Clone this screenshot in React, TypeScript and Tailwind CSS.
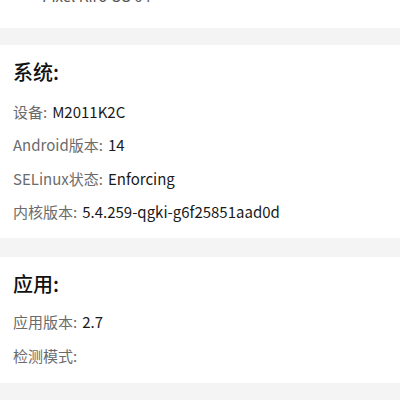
const FONT = { fontFamily: '"Noto Sans CJK SC", "Noto Sans", sans-serif' };

interface Row {
  label: string;
  value?: string;
}

const SYSTEM: Row[] = [
  { label: "设备", value: "M2011K2C" },
  { label: "Android版本", value: "14" },
  { label: "SELinux状态", value: "Enforcing" },
  { label: "内核版本", value: "5.4.259-qgki-g6f25851aad0d" },
];

const APP: Row[] = [
  { label: "应用版本", value: "2.7" },
  { label: "检测模式" },
];

function Section({ title, rows, rowClass, gapClass }: { title: string; rows: Row[]; rowClass: string; gapClass: string }) {
  return (
    <div className="bg-white px-[13px] pt-[13px]">
      <div className={`flex h-[28px] items-center text-[20px] font-medium text-[#111] ${gapClass}`}>
        {title}:
      </div>
      {rows.map((r) => (
        <div key={r.label} className={`flex items-center text-[15px] ${rowClass}`}>
          <span className="text-[#6b6b6b]">{r.label}:</span>
          {r.value && <span className="ml-[5px] text-[#1a1a1a]">{r.value}</span>}
        </div>
      ))}
    </div>
  );
}

export default function App() {
  return (
    <div className="h-[400px] w-[400px] overflow-hidden bg-[#f4f4f4]" style={FONT}>
      {/* 上一张卡片的末尾，已滚出屏幕 */}
      <div className="h-[28px] overflow-hidden bg-white">
        <div className="-mt-[16px] pl-[42px] text-[15px] leading-[24px] text-[#555]">
          Pixel Kiro OS 64
        </div>
      </div>
      <div className="h-[17px]" />
      <div className="h-[193px] overflow-hidden bg-white">
        <Section title="系统" rows={SYSTEM} rowClass="h-[33.5px]" gapClass="mb-[9px]" />
      </div>
      <div className="h-[19px]" />
      <div className="h-[126px] overflow-hidden bg-white">
        <Section title="应用" rows={APP} rowClass="h-[34px]" gapClass="mb-[7px]" />
      </div>
    </div>
  );
}
